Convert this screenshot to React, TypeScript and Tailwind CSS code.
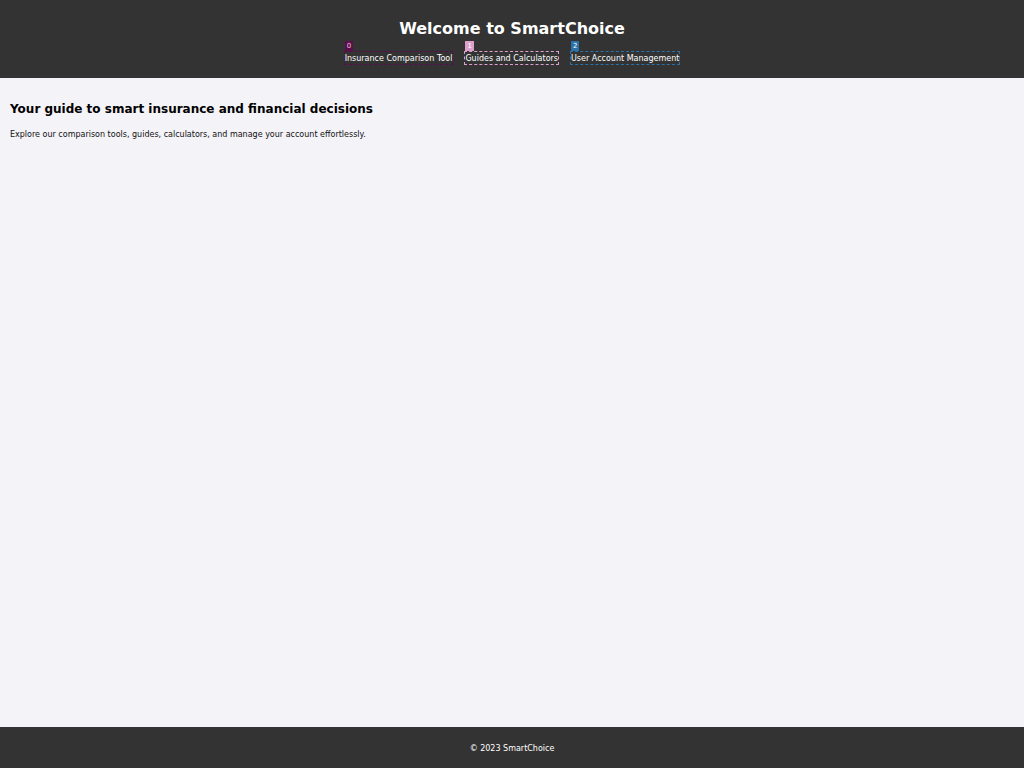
import React from 'react';

const links = [
  { label: 'Insurance Comparison Tool', badge: 'bg-[#5a0f4c] text-[#e8c0dc]', border: 'border-[#5a0f4c]' },
  { label: 'Guides and Calculators', badge: 'bg-[#dca0cc] text-white', border: 'border-[#dca0cc]' },
  { label: 'User Account Management', badge: 'bg-[#2a72a8] text-white', border: 'border-[#2a72a8]' },
];

export default function App() {
  return (
    <div className="min-h-screen flex flex-col bg-[#f4f3f8] font-['DejaVu_Sans',sans-serif]">
      <header className="bg-[#333333] text-white h-[78px] pt-[19px]">
        <h1 className="text-center text-[16px] leading-[20px] font-bold">Welcome to SmartChoice</h1>
        <nav className="mt-[12px] flex justify-center gap-[11px]">
          {links.map((l, i) => (
            <div key={l.label} className="relative">
              <span className={`absolute -top-[10px] left-[1px] h-[10px] px-[2px] text-[7px] leading-[10px] ${l.badge}`}>
                {i}
              </span>
              <a className={`block border border-dashed ${l.border} text-[8px] leading-[11px] pt-[1px] text-white`}>
                {l.label}
              </a>
            </div>
          ))}
        </nav>
      </header>
      <main className="flex-1 px-[10px] pt-[23px]">
        <h2 className="text-[12px] leading-[16px] font-bold text-black">
          Your guide to smart insurance and financial decisions
        </h2>
        <p className="mt-[12px] text-[8px] leading-[11px] text-[#111]">
          Explore our comparison tools, guides, calculators, and manage your account effortlessly.
        </p>
      </main>
      <footer className="bg-[#333333] text-white h-[41px] pt-[2px] flex items-center justify-center text-[8px]">
        © 2023 SmartChoice
      </footer>
    </div>
  );
}
